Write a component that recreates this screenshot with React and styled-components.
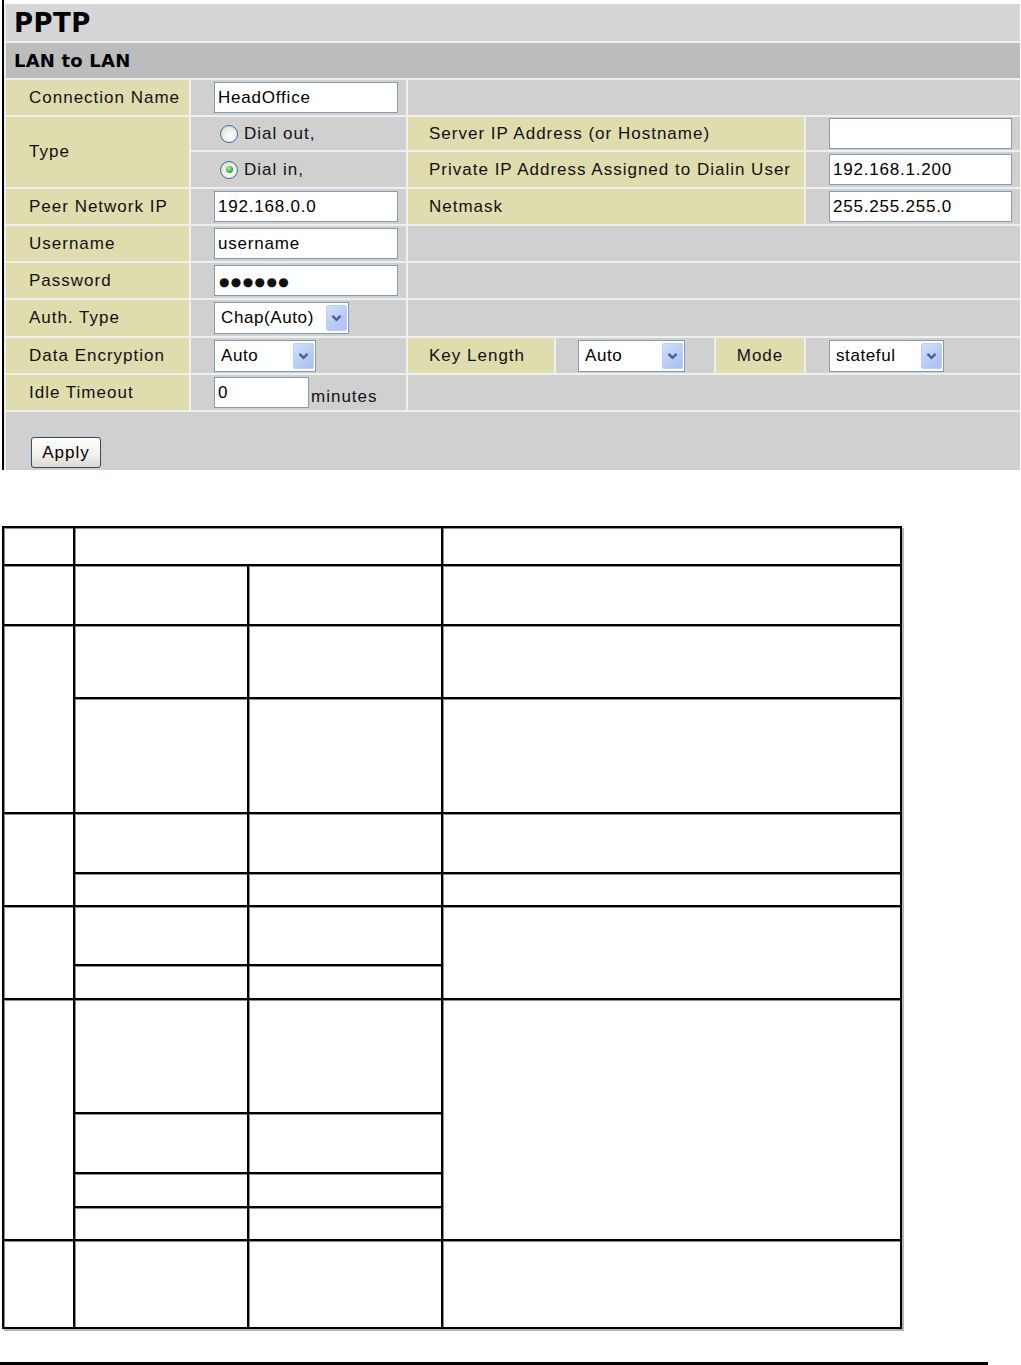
import React from "react"
import styled, { createGlobalStyle } from "styled-components"

const GlobalStyle = createGlobalStyle`
  html, body {
    margin: 0;
    padding: 0;
    background: #fff;
  }
  body {
    font-family: "Liberation Sans", Arial, sans-serif;
    color: #000;
  }
`

const Page = styled.div`
  width: 1021px;
  height: 1365px;
  overflow: hidden;
`

const Frame = styled.div`
  margin-left: 2px;
  width: 1016px;
  border-left: 2px solid #000;
  padding-top: 4px;
`

const Panel = styled.div`
  display: grid;
  grid-template-columns: 183px 215px 146px 158px 88px 214px;
  grid-template-rows: 37px 35px 35px 33px 35px 35px 35px 35px 36px 35px 35px 58px;
  gap: 2px;
  padding-left: 2px;
  background: #efefef;
`

const tones = {
  title: "#d6d5d8",
  section: "#bdbcbd",
  field: "#d0d0d0",
  label: "#dfdcae",
}

const Cell = styled.div`
  grid-column: span ${p => p.$span || 1};
  grid-row: span ${p => p.$rows || 1};
  background: ${p => tones[p.$tone || "field"]};
  display: flex;
  align-items: ${p => (p.$top ? "flex-start" : "center")};
  justify-content: ${p => (p.$center ? "center" : "flex-start")};
  padding-left: ${p => (p.$pad === undefined ? 23 : p.$pad)}px;
  padding-top: ${p => p.$padTop || 0}px;
  font-size: 17px;
  letter-spacing: 1px;
  color: #111;
  white-space: nowrap;
  box-sizing: border-box;
`

const Title = styled(Cell)`
  font-family: "DejaVu Sans", sans-serif;
  font-size: 26px;
  font-weight: bold;
  padding-left: 8px;
  letter-spacing: 0.5px;
  color: #000;
`

const Section = styled(Cell)`
  font-family: "DejaVu Sans", sans-serif;
  font-size: 18px;
  font-weight: bold;
  padding-left: 8px;
  letter-spacing: 0.2px;
  color: #000;
`

const TextBox = styled.input`
  box-sizing: border-box;
  width: ${p => p.$w}px;
  height: 31px;
  margin: 0;
  border: 1px solid #7f9db9;
  background: #fff;
  padding: 1px 3px 0;
  font-family: "Liberation Sans", Arial, sans-serif;
  font-size: 17px;
  letter-spacing: 0.8px;
  color: #000;
  outline: none;
`

const Secret = styled.div`
  box-sizing: border-box;
  width: 184px;
  height: 31px;
  border: 1px solid #7f9db9;
  background: #fff;
  padding: 2px 0 0 4px;
  display: flex;
  align-items: center;
  font-family: "DejaVu Sans", sans-serif;
  font-size: 12px;
  letter-spacing: 1.4px;
`

const SelectBox = styled.div`
  box-sizing: border-box;
  width: ${p => p.$w}px;
  height: 32px;
  margin-left: ${p => p.$shift || 0}px;
  border: 1px solid #7f9db9;
  background: #fff;
  display: flex;
  align-items: center;
  justify-content: space-between;
  padding: 0 1px 0 6px;
  font-size: 17px;
  letter-spacing: 0.6px;
  color: #000;
`

const DropButton = styled.span`
  box-sizing: border-box;
  width: 21px;
  height: 26px;
  border: 1px solid #bccffb;
  border-radius: 2px;
  background: linear-gradient(135deg, #d3e0fd, #b3c7f6 70%, #a9c0f4);
  display: flex;
  align-items: center;
  justify-content: center;
`

const RadioLabel = styled.label`
  display: flex;
  align-items: center;
  gap: 6px;
  padding-left: 6px;
`

const RadioDot = styled.span`
  box-sizing: border-box;
  width: 18px;
  height: 18px;
  border-radius: 50%;
  border: 1px solid #3f6e99;
  background: radial-gradient(circle at 60% 65%, #fff 0%, #f2f1ec 40%, #d3d1c8 100%);
  display: flex;
  align-items: center;
  justify-content: center;

  &::after {
    content: "";
    width: 7px;
    height: 7px;
    border-radius: 50%;
    background: ${p =>
      p.$checked ? "radial-gradient(circle at 40% 35%, #a6f0a0, #29a32a 70%)" : "transparent"};
  }
`

const Unit = styled.span`
  margin-left: 2px;
  padding-top: 8px;
`

const ApplyButton = styled.button`
  box-sizing: border-box;
  width: 70px;
  height: 31px;
  border: 1px solid #2c4d72;
  border-radius: 3px;
  background: linear-gradient(#ffffff, #f1f0ea 60%, #dcd9cd);
  font-family: "Liberation Sans", Arial, sans-serif;
  font-size: 17px;
  letter-spacing: 1px;
  color: #000;
  padding: 0;
`

const DocTable = styled.table`
  margin: 56px 0 0 2px;
  width: 900px;
  border-collapse: collapse;
  table-layout: fixed;
  box-shadow: 2px 2px 0 #b4b4b4;
`

const DocCell = styled.td`
  border: 2px solid #000;
  box-shadow: inset 1px 1px 0 #8d8d8d;
  padding: 0;
  background: #fff;
`

const Rule = styled.div`
  margin-top: 33px;
  width: 988px;
  height: 3px;
  background: #000;
`

const Chevron = () => (
  <svg width="11" height="8" viewBox="0 0 11 8">
    <path d="M1.5 1.8 L5.5 5.8 L9.5 1.8" fill="none" stroke="#4d6185" strokeWidth="2.4" />
  </svg>
)

const Select = ({ value, w, shift }) => (
  <SelectBox $w={w} $shift={shift}>
    <span>{value}</span>
    <DropButton>
      <Chevron />
    </DropButton>
  </SelectBox>
)

const Radio = ({ checked, children }) => (
  <RadioLabel>
    <RadioDot $checked={checked} />
    {children}
  </RadioLabel>
)

// row heights of the lower table, each row lists its cells
const docRows = [
  { h: 38, cells: [{}, { colSpan: 2 }, {}] },
  { h: 60, cells: [{}, {}, {}, {}] },
  { h: 73, cells: [{ rowSpan: 2 }, {}, {}, {}] },
  { h: 115, cells: [{}, {}, {}] },
  { h: 60, cells: [{ rowSpan: 2 }, {}, {}, {}] },
  { h: 33, cells: [{}, {}, {}] },
  { h: 59, cells: [{ rowSpan: 2 }, {}, {}, { rowSpan: 2 }] },
  { h: 34, cells: [{}, {}] },
  { h: 114, cells: [{ rowSpan: 4 }, {}, {}, { rowSpan: 4 }] },
  { h: 60, cells: [{}, {}] },
  { h: 34, cells: [{}, {}] },
  { h: 33, cells: [{}, {}] },
  { h: 88, cells: [{}, {}, {}, {}] },
]

const App = () => {
  return (
    <Page>
      <GlobalStyle />
      <Frame>
        <Panel>
          <Title $tone="title" $span={6}>PPTP</Title>
          <Section $tone="section" $span={6}>LAN to LAN</Section>

          <Cell $tone="label">Connection Name</Cell>
          <Cell>
            <TextBox $w={184} defaultValue="HeadOffice" />
          </Cell>
          <Cell $span={4} />

          <Cell $tone="label" $rows={2}>Type</Cell>
          <Cell>
            <Radio>Dial out,</Radio>
          </Cell>
          <Cell $tone="label" $span={3} $pad={21}>Server IP Address (or Hostname)</Cell>
          <Cell>
            <TextBox $w={183} defaultValue="" />
          </Cell>

          <Cell>
            <Radio checked>Dial in,</Radio>
          </Cell>
          <Cell $tone="label" $span={3} $pad={21}>Private IP Address Assigned to Dialin User</Cell>
          <Cell>
            <TextBox $w={183} defaultValue="192.168.1.200" />
          </Cell>

          <Cell $tone="label">Peer Network IP</Cell>
          <Cell>
            <TextBox $w={184} defaultValue="192.168.0.0" />
          </Cell>
          <Cell $tone="label" $span={3} $pad={21}>Netmask</Cell>
          <Cell>
            <TextBox $w={183} defaultValue="255.255.255.0" />
          </Cell>

          <Cell $tone="label">Username</Cell>
          <Cell>
            <TextBox $w={184} defaultValue="username" />
          </Cell>
          <Cell $span={4} />

          <Cell $tone="label">Password</Cell>
          <Cell>
            <Secret>●●●●●●</Secret>
          </Cell>
          <Cell $span={4} />

          <Cell $tone="label">Auth. Type</Cell>
          <Cell>
            <Select value="Chap(Auto)" w={135} />
          </Cell>
          <Cell $span={4} />

          <Cell $tone="label">Data Encryption</Cell>
          <Cell>
            <Select value="Auto" w={102} />
          </Cell>
          <Cell $tone="label" $pad={21}>Key Length</Cell>
          <Cell $pad={22}>
            <Select value="Auto" w={107} />
          </Cell>
          <Cell $tone="label" $pad={0} $center>Mode</Cell>
          <Cell>
            <Select value="stateful" w={115} />
          </Cell>

          <Cell $tone="label">Idle Timeout</Cell>
          <Cell>
            <TextBox $w={95} defaultValue="0" />
            <Unit>minutes</Unit>
          </Cell>
          <Cell $span={4} />

          <Cell $span={6} $top $pad={25} $padTop={25}>
            <ApplyButton type="button">Apply</ApplyButton>
          </Cell>
        </Panel>
      </Frame>

      <DocTable>
        <colgroup>
          <col style={{ width: 71 }} />
          <col style={{ width: 174 }} />
          <col style={{ width: 194 }} />
          <col />
        </colgroup>
        <tbody>
          {docRows.map((row, i) => (
            <tr key={i} style={{ height: row.h }}>
              {row.cells.map((c, j) => (
                <DocCell key={j} colSpan={c.colSpan} rowSpan={c.rowSpan} />
              ))}
            </tr>
          ))}
        </tbody>
      </DocTable>

      <Rule />
    </Page>
  )
}

export default App
